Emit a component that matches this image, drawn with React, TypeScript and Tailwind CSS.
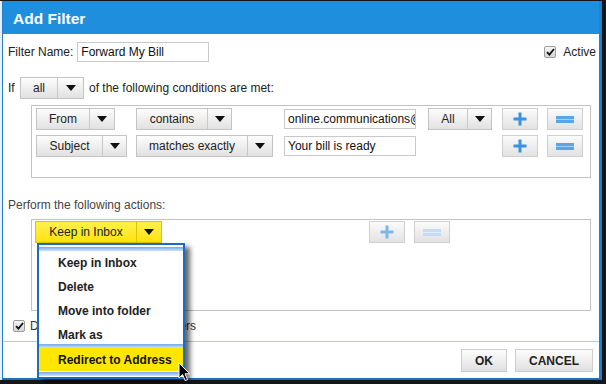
import React from "react";

const FONT = { fontFamily: '"Liberation Sans", Arial, sans-serif' };

function Arrow() {
  return (
    <svg width="10" height="6" viewBox="0 0 10 6">
      <path d="M0 0 L10 0 L5 6 Z" fill="#111" />
    </svg>
  );
}

function Select({
  label,
  w,
  aw,
  yellow = false,
}: {
  label: string;
  w: number;
  aw: number;
  yellow?: boolean;
}) {
  const base = yellow
    ? "bg-gradient-to-b from-[#fff04a] to-[#ffe200] border-[#d9c600]"
    : "bg-gradient-to-b from-[#fdfdfd] to-[#e1e1e1] border-[#c4c4c4]";
  const div = yellow ? "border-l-[#d9c600]" : "border-l-[#c8c8c8]";
  return (
    <div
      className={`flex h-[22px] border ${base} text-[12px] text-[#222]`}
      style={{ width: w }}
    >
      <div className="flex-1 flex items-center justify-center">{label}</div>
      <div className={`flex items-center justify-center border-l ${div}`} style={{ width: aw }}>
        <Arrow />
      </div>
    </div>
  );
}

function PlusBtn({ pale = false }: { pale?: boolean }) {
  return (
    <div className="w-[36px] h-[22px] border border-[#cfcfcf] bg-gradient-to-b from-[#fbfbfb] to-[#e2e2e2] flex items-center justify-center">
      <svg width="14" height="14" viewBox="0 0 14 14">
        <rect x="5.5" y="0.5" width="3" height="13" fill={pale ? "#7fb6ea" : "#3a92e2"} />
        <rect x="0.5" y="5.5" width="13" height="3" fill={pale ? "#7fb6ea" : "#3a92e2"} />
      </svg>
    </div>
  );
}

function MinusBtn({ pale = false }: { pale?: boolean }) {
  return (
    <div className="w-[36px] h-[22px] border border-[#cfcfcf] bg-gradient-to-b from-[#fbfbfb] to-[#e2e2e2] flex items-center justify-center">
      <svg width="18" height="7" viewBox="0 0 18 7">
        <rect x="0" y="0" width="18" height="7" fill={pale ? "#c3dbf3" : "#5aa5ea"} />
        <rect x="0" y="3" width="18" height="1" fill={pale ? "#e3eefa" : "#a8d0f5"} />
      </svg>
    </div>
  );
}

function Check() {
  return (
    <div className="w-[12px] h-[12px] rounded-[2px] border border-[#9c9c9c] bg-gradient-to-b from-[#f4f4f4] to-[#d6d6d6] flex items-center justify-center">
      <svg width="9" height="8" viewBox="0 0 9 8">
        <path d="M1 4.2 L3.4 6.6 L8 1" stroke="#111" strokeWidth="1.8" fill="none" />
      </svg>
    </div>
  );
}

function Input({ value, w }: { value: string; w: number }) {
  return (
    <div
      className="h-[20px] border border-[#c9c9c9] bg-white flex items-center pl-[3px] overflow-hidden whitespace-nowrap text-[12px] text-[#111]"
      style={{ width: w }}
    >
      {value}
    </div>
  );
}

function Stripe() {
  return <div className="h-[4px] bg-gradient-to-b from-[#6eaaea] to-[#cfe4f9]" />;
}

export default function App() {
  return (
    <div className="relative w-[606px] h-[384px] bg-[#161616] overflow-hidden" style={FONT}>
      <div className="mt-[1px] w-[602px] h-[379px] bg-[#e4f1fb] pl-[2px]">
        <div className="h-full flex flex-col bg-white border-l border-l-[#2a80c8] border-r-[3px] border-r-[#1f7fd0] border-b-[2px] border-b-[#1f6fb8]">
          {/* header */}
          <div className="h-[33px] bg-[#1f8edd] flex items-center pl-[10px] pt-[2px]">
            <span className="text-white font-bold text-[15.5px]">Add Filter</span>
          </div>

          {/* filter name */}
          <div className="mt-[7px] h-[21px] flex items-center pl-[5px] pr-[3px] text-[12px] text-[#222]">
            <span>Filter Name:</span>
            <div className="ml-[4px]">
              <Input value="Forward My Bill" w={132} />
            </div>
            <div className="flex-1" />
            <Check />
            <span className="ml-[7px]">Active</span>
          </div>

          {/* If row */}
          <div className="mt-[15px] h-[22px] flex items-center pl-[5px] text-[12px] text-[#222]">
            <span className="w-[12px]">If</span>
            <Select label="all" w={64} aw={26} />
            <span className="ml-[5px]">of the following conditions are met:</span>
          </div>

          {/* conditions box */}
          <div className="mt-[6px] ml-[28px] w-[560px] h-[73px] border border-[#c2c2c2] pt-[2px] pl-[4px] flex flex-col gap-[5px]">
            <div className="grid grid-cols-[100px_148px_144px_74px_45px_36px] items-center h-[22px]">
              <Select label="From" w={79} aw={25} />
              <Select label="contains" w={96} aw={24} />
              <Input value="online.communications@comcast.net" w={132} />
              <Select label="All" w={64} aw={24} />
              <PlusBtn />
              <MinusBtn />
            </div>
            <div className="grid grid-cols-[100px_148px_144px_74px_45px_36px] items-center h-[22px]">
              <Select label="Subject" w={91} aw={24} />
              <Select label="matches exactly" w={137} aw={25} />
              <Input value="Your bill is ready" w={132} />
              <div />
              <PlusBtn />
              <MinusBtn />
            </div>
          </div>

          {/* perform */}
          <div className="mt-[20px] h-[14px] pl-[5px] text-[12px] leading-[14px] text-[#444]">
            Perform the following actions:
          </div>

          {/* actions box */}
          <div className="mt-[7px] ml-[28px] w-[560px] h-[92px] border border-[#c2c2c2] pt-[1px] pl-[3px] flex items-start">
            <Select label="Keep in Inbox" w={127} aw={25} yellow />
            <div className="ml-[207px] flex gap-[9px]">
              <PlusBtn pale />
              <MinusBtn pale />
            </div>
          </div>

          {/* don't process */}
          <div className="mt-[9px] h-[12px] flex items-center pl-[10px] text-[12px] text-[#333]">
            <Check />
            <span className="ml-[5px]">Do not process any other filters</span>
          </div>

          {/* separator */}
          <div className="mt-[9px] h-[1px] bg-[#9fd0f0]" />

          {/* footer */}
          <div className="mt-[7px] h-[23px] flex justify-end gap-[8px] pr-[6px]">
            <div className="w-[46px] h-[23px] border border-[#cdcdcd] bg-gradient-to-b from-[#fdfdfd] to-[#e0e0e0] flex items-center justify-center text-[12px] font-bold text-[#222]">
              OK
            </div>
            <div className="w-[78px] h-[23px] border border-[#cdcdcd] bg-gradient-to-b from-[#fdfdfd] to-[#e0e0e0] flex items-center justify-center text-[12px] font-bold text-[#222]">
              CANCEL
            </div>
          </div>
        </div>
      </div>

      {/* dropdown menu */}
      <div className="absolute left-[37px] top-[243px] w-[148px] h-[136px] bg-white border-2 border-[#1b6cbe] shadow-[5px_4px_5px_rgba(0,0,0,0.6)] flex flex-col">
        <div className="h-[2px]" />
        <Stripe />
        <div className="h-[24px] flex items-center pl-[19px] text-[12px] font-bold text-[#222]">Keep in Inbox</div>
        <div className="h-[24px] flex items-center pl-[19px] text-[12px] font-bold text-[#222]">Delete</div>
        <div className="h-[24px] flex items-center pl-[19px] text-[12px] font-bold text-[#222]">Move into folder</div>
        <div className="h-[21px] flex items-center pl-[19px] pt-[3px] text-[12px] font-bold text-[#222]">Mark as</div>
        <Stripe />
        <div className="h-[23px] bg-[#ffe600] flex items-center pl-[19px] text-[12px] font-bold text-[#111]">
          Redirect to Address
        </div>
        <div className="h-[1px]" />
        <Stripe />
      </div>

      {/* cursor */}
      <svg className="absolute left-[178px] top-[362px]" width="14" height="21" viewBox="0 0 14 21">
        <path d="M1 1 L1 16 L4.6 12.6 L7.2 18.6 L9.6 17.6 L7 11.8 L11.8 11.8 Z" fill="#000" stroke="#fff" strokeWidth="1" />
      </svg>
    </div>
  );
}
